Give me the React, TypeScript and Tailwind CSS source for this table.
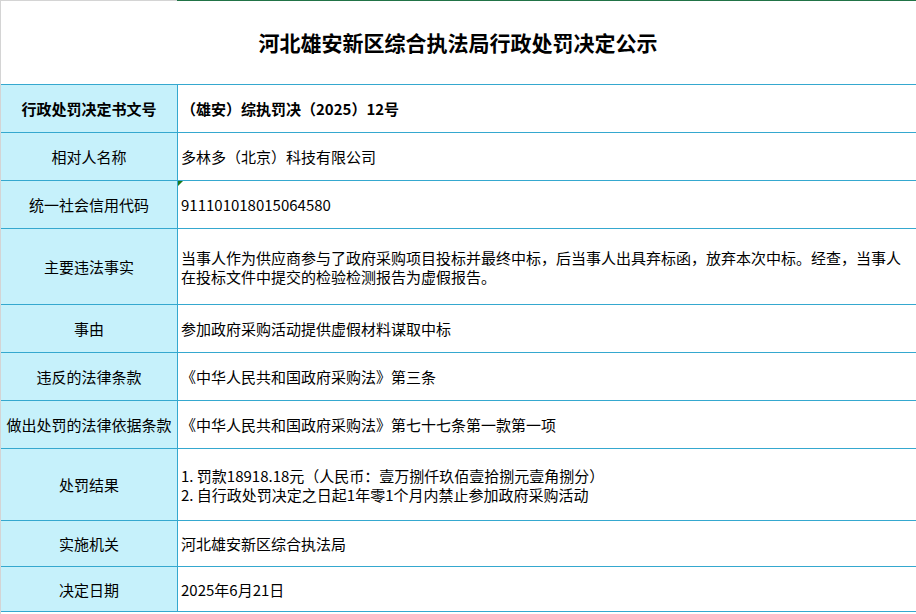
const rows: { label: string; value: React.ReactNode; h: string; bold?: boolean }[] = [
  { label: "行政处罚决定书文号", value: "（雄安）综执罚决（2025）12号", h: "h-[48px]", bold: true },
  { label: "相对人名称", value: "多林多（北京）科技有限公司", h: "h-[48px]" },
  { label: "统一社会信用代码", value: "911101018015064580", h: "h-[48px]" },
  {
    label: "主要违法事实",
    value: "当事人作为供应商参与了政府采购项目投标并最终中标，后当事人出具弃标函，放弃本次中标。经查，当事人在投标文件中提交的检验检测报告为虚假报告。",
    h: "h-[76px]",
  },
  { label: "事由", value: "参加政府采购活动提供虚假材料谋取中标", h: "h-[48px]" },
  { label: "违反的法律条款", value: "《中华人民共和国政府采购法》第三条", h: "h-[48px]" },
  { label: "做出处罚的法律依据条款", value: "《中华人民共和国政府采购法》第七十七条第一款第一项", h: "h-[48px]" },
  {
    label: "处罚结果",
    value: (
      <>
        <div>1. 罚款18918.18元（人民币：壹万捌仟玖佰壹拾捌元壹角捌分）</div>
        <div>2. 自行政处罚决定之日起1年零1个月内禁止参加政府采购活动</div>
      </>
    ),
    h: "h-[72px]",
  },
  { label: "实施机关", value: "河北雄安新区综合执法局", h: "h-[46px]" },
  { label: "决定日期", value: "2025年6月21日", h: "h-[45px]" },
];

export default function App() {
  return (
    <div
      className="w-[916px] h-[614px] overflow-hidden bg-white border-l border-[#d4d4d4] text-black"
      style={{ fontFamily: '"Noto Sans CJK SC", "Liberation Sans", sans-serif' }}
    >
      <div className="flex h-px">
        <div className="w-[176px] bg-[#d4d4d4]" />
        <div className="flex-1 bg-[#217346]" />
      </div>
      <div className="h-[84px] border-b border-[#35a8cf] flex items-center justify-center pr-px">
        <h1 className="text-[21px] font-bold leading-none">河北雄安新区综合执法局行政处罚决定公示</h1>
      </div>
      {rows.map((r, i) => (
        <div key={i} className={`flex ${r.h} border-b border-[#35a8cf] text-[15px] leading-[19px]`}>
          <div
            className={`w-[177px] shrink-0 bg-[#c6f1fb] border-r border-[#35a8cf] flex items-center justify-center ${r.bold ? "font-bold" : ""}`}
          >
            {r.label}
          </div>
          <div className={`relative flex-1 flex items-center pl-[3px] pr-3 ${r.bold ? "font-bold" : ""}`}>
            {i === 2 && (
              <span className="absolute left-0 top-0 w-0 h-0 border-t-[5px] border-r-[5px] border-t-[#1b7a1b] border-r-transparent" />
            )}
            <div>{r.value}</div>
          </div>
        </div>
      ))}
    </div>
  );
}
